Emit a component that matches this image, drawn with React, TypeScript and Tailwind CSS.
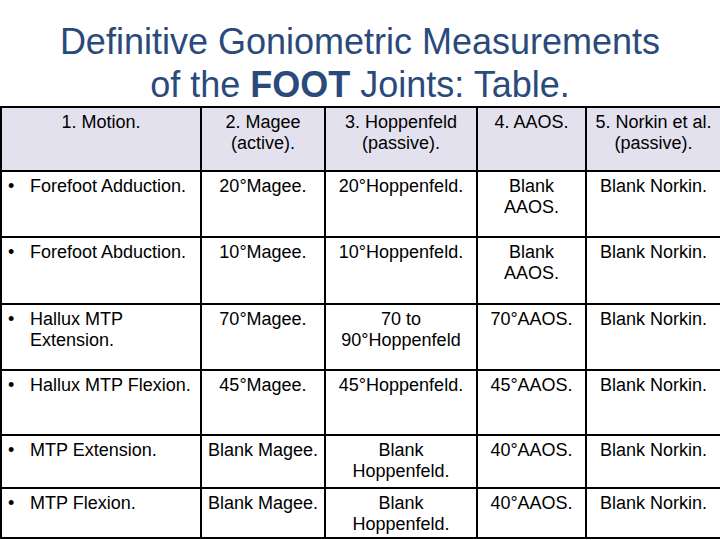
const header = ["1. Motion.", "2. Magee\n(active).", "3. Hoppenfeld\n(passive).", "4. AAOS.", "5. Norkin et al.\n(passive)."];

const rows: { h: string; cells: string[] }[] = [
  { h: "h-[66px]", cells: ["Forefoot Adduction.", "20°Magee.", "20°Hoppenfeld.", "Blank\nAAOS.", "Blank Norkin."] },
  { h: "h-[67px]", cells: ["Forefoot Abduction.", "10°Magee.", "10°Hoppenfeld.", "Blank\nAAOS.", "Blank Norkin."] },
  { h: "h-[66px]", cells: ["Hallux MTP\nExtension.", "70°Magee.", "70 to\n90°Hoppenfeld", "70°AAOS.", "Blank Norkin."] },
  { h: "h-[65px]", cells: ["Hallux MTP Flexion.", "45°Magee.", "45°Hoppenfeld.", "45°AAOS.", "Blank Norkin."] },
  { h: "h-[53px]", cells: ["MTP Extension.", "Blank Magee.", "Blank\nHoppenfeld.", "40°AAOS.", "Blank Norkin."] },
  { h: "h-[50px]", cells: ["MTP Flexion.", "Blank Magee.", "Blank\nHoppenfeld.", "40°AAOS.", "Blank Norkin."] },
];

const widths = ["w-[200px]", "w-[124px]", "w-[152px]", "w-[109px]", "w-[135px]"];

export default function App() {
  return (
    <div className="w-[720px] h-[540px] overflow-hidden bg-white font-['Liberation_Sans',Arial,sans-serif]">
      <h1 className="pt-5 text-center text-[36px] leading-[43px] text-[#2a4a7b] font-normal">
        Definitive Goniometric Measurements
        <br />
        of the <span className="font-bold">FOOT</span> Joints: Table.
      </h1>

      <table className="w-[720px] table-fixed border-collapse text-[18px] leading-[21px] text-black">
        <colgroup>
          {widths.map((w, i) => (
            <col key={i} className={w} />
          ))}
        </colgroup>
        <thead>
          <tr className="h-[64px] bg-[#e4e1ee]">
            {header.map((t, i) => (
              <th key={i} className="border-2 border-black px-1 pt-1 align-top text-center font-normal whitespace-pre-line">
                {t}
              </th>
            ))}
          </tr>
        </thead>
        <tbody>
          {rows.map((r, ri) => (
            <tr key={ri} className={r.h}>
              {r.cells.map((t, ci) =>
                ci === 0 ? (
                  <td key={ci} className="border-2 border-black pl-[6px] pt-1 align-top">
                    <div className="flex">
                      <span className="w-[22px] shrink-0">•</span>
                      <span className="whitespace-pre-line">{t}</span>
                    </div>
                  </td>
                ) : (
                  <td key={ci} className="border-2 border-black px-1 pt-1 align-top text-center whitespace-pre-line">
                    {t}
                  </td>
                )
              )}
            </tr>
          ))}
        </tbody>
      </table>
    </div>
  );
}
